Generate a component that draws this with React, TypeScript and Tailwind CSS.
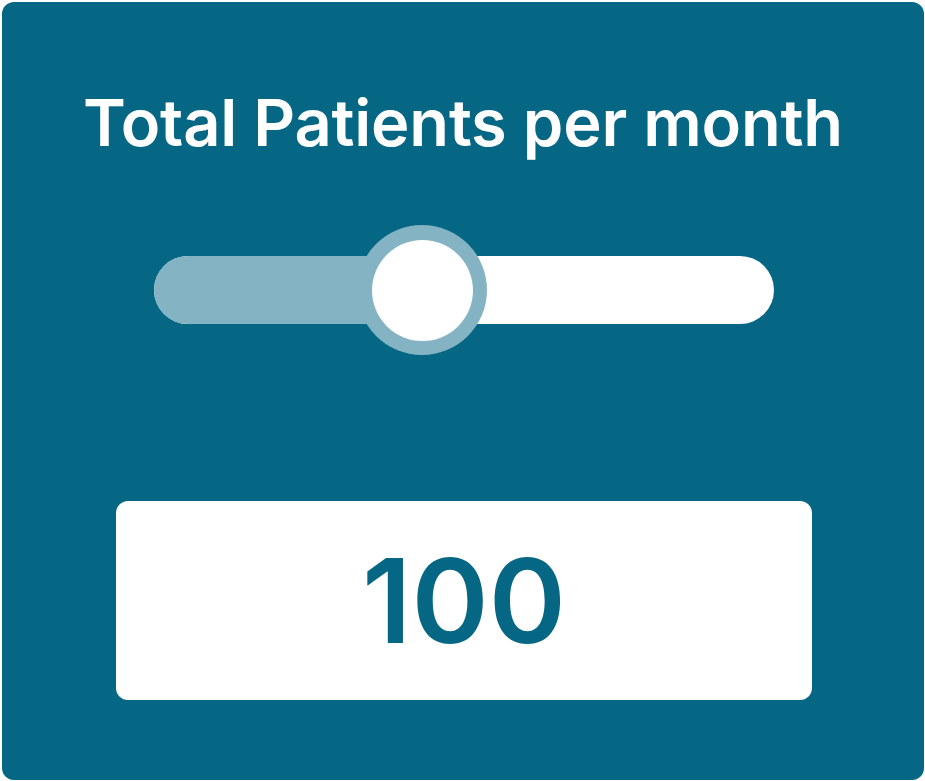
export default function App() {
  const value = 100
  const pct = ((422 - 154) / (774 - 154)) * 100

  return (
    <div className="w-[925px] h-[781px] bg-white p-[2px]" style={{ fontFamily: "Inter, 'Noto Sans', sans-serif" }}>
      <div className="w-[922px] h-[778px] rounded-[12px] bg-[#066785] flex flex-col items-center">
        <h1 className="mt-[86px] text-[65px] leading-[70px] font-semibold text-white tracking-[-0.2px]">
          Total Patients per month
        </h1>

        <div className="mt-[67px] ml-[2px] w-[620px] h-[130px] relative flex items-center">
          <div className="w-full h-[68px] rounded-full bg-white overflow-hidden">
            <div className="h-full bg-[#84b3c3]" style={{ width: `${pct}%` }} />
          </div>
          <div
            className="absolute top-0 w-[130px] h-[130px] -ml-[65px] rounded-full bg-[#84b3c3] flex items-center justify-center"
            style={{ left: `${pct}%` }}
          >
            <div className="w-[101px] h-[101px] rounded-full bg-white" />
          </div>
        </div>

        <div className="mt-[146px] ml-[2px] w-[696px] h-[199px] rounded-[12px] bg-white flex items-center justify-center">
          <span className="text-[117px] leading-none font-semibold text-[#066785]">{value}</span>
        </div>
      </div>
    </div>
  )
}
